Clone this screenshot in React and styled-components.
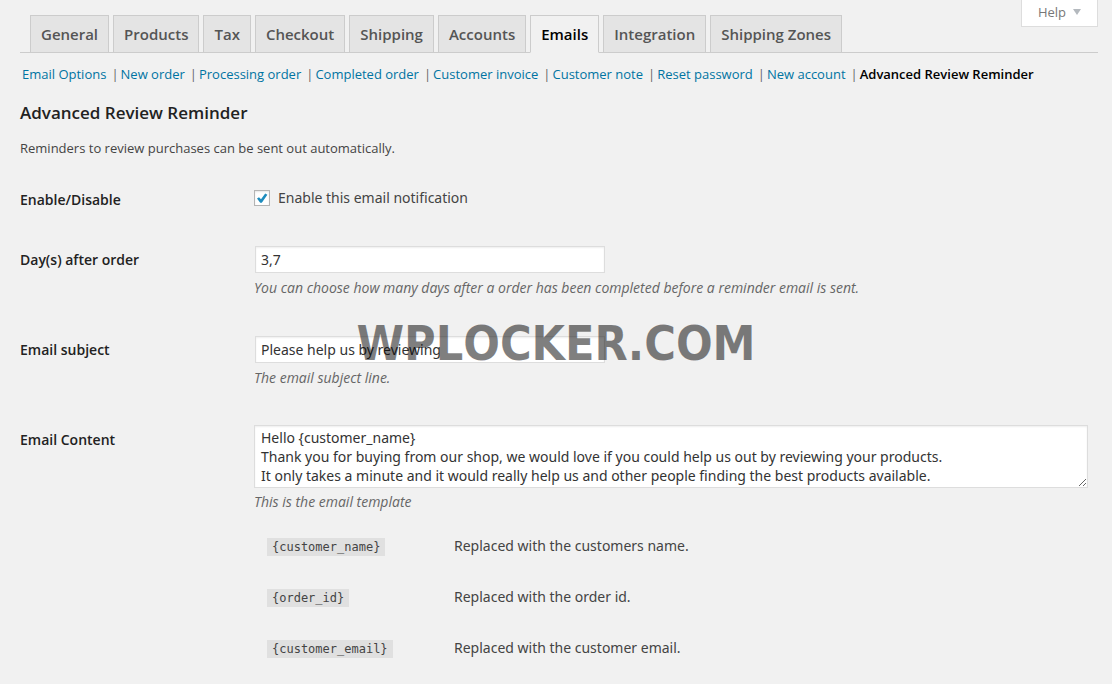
import React, { useState } from "react";
import styled, { createGlobalStyle } from "styled-components";

const GlobalStyle = createGlobalStyle`
  * { box-sizing: border-box; }
  body {
    margin: 0;
    background: #f1f1f1;
    color: #444;
    font: 14px/20px "Open Sans", sans-serif;
  }
`;

const Page = styled.main`
  padding: 0 14px 0 20px;
`;

const Header = styled.header`
  display: flex;
  justify-content: space-between;
  align-items: flex-start;
  border-bottom: 1px solid #ccc;
`;

const Tabs = styled.nav`
  display: flex;
  gap: 4px;
  padding: 15px 0 0 10px;
  margin-bottom: -1px;
`;

const Tab = styled.a`
  padding: 6px 10px;
  border: 1px solid #ccc;
  border-bottom-color: ${(p) => (p.$active ? "#f1f1f1" : "#ccc")};
  background: ${(p) => (p.$active ? "#f1f1f1" : "#e4e4e4")};
  color: ${(p) => (p.$active ? "#000" : "#555")};
  font-size: 15px;
  line-height: 24px;
  font-weight: 600;
  text-decoration: none;
  white-space: nowrap;
`;

const HelpButton = styled.button`
  display: flex;
  align-items: center;
  gap: 7px;
  padding: 2px 16px 4px;
  border: 1px solid #ddd;
  border-top: 0;
  background: #fff;
  color: #777;
  font: 13px/20px "Open Sans", sans-serif;
`;

const Arrow = styled.span`
  border: 4px solid transparent;
  border-top: 6px solid #b4b9be;
  border-bottom: 0;
`;

const SubNav = styled.ul`
  display: flex;
  flex-wrap: wrap;
  margin: 11px 0 0;
  padding: 0 2px;
  list-style: none;
  font-size: 13px;
  color: #666;
`;

const SubLink = styled.a`
  color: ${(p) => (p.$active ? "#000" : "#0074a2")};
  font-weight: ${(p) => (p.$active ? 600 : 400)};
  text-decoration: none;
`;

const Separator = styled.span`
  margin: 0 2px 0 5px;
`;

const Title = styled.h3`
  margin: 17px 0 0;
  color: #222;
  font-size: 17px;
  line-height: 24px;
  font-weight: 600;
`;

const Intro = styled.p`
  margin: 13px 0 12px;
  font-size: 13px;
`;

const Row = styled.div`
  display: grid;
  grid-template-columns: 234px minmax(0, 1fr);
`;

const RowLabel = styled.label`
  padding: 20px 10px 20px 0;
  color: #222;
  font-weight: 600;
`;

const Cell = styled.div`
  padding: 15px 10px 15px 0;
  font-family: "Noto Sans", "Open Sans", sans-serif;
`;

const CheckLabel = styled.label`
  display: flex;
  align-items: center;
  gap: 8px;
  margin: 3px 0 6px;
`;

const CheckBox = styled.span`
  display: grid;
  width: 16px;
  height: 16px;
  > * { grid-area: 1 / 1; }
  svg { pointer-events: none; }
  input:not(:checked) + svg { visibility: hidden; }
`;

const CheckInput = styled.input`
  appearance: none;
  margin: 0;
  border: 1px solid #b4b4b4;
  background: #fff;
  box-shadow: inset 0 1px 2px rgba(0, 0, 0, 0.1);
`;

const TextInput = styled.input`
  display: block;
  width: 350px;
  max-width: 100%;
  height: 27px;
  margin: 1px 1px 5px;
  padding: 3px 5px;
  border: 1px solid #ddd;
  background: #fff;
  box-shadow: inset 0 1px 2px rgba(0, 0, 0, 0.07);
  color: #333;
  font: 14px/19px "Noto Sans", "Open Sans", sans-serif;
`;

const TextArea = styled.textarea`
  display: block;
  width: 100%;
  height: 63px;
  padding: 2px 6px;
  border: 1px solid #ddd;
  background: #fff;
  box-shadow: inset 0 1px 2px rgba(0, 0, 0, 0.07);
  color: #333;
  font: 14px/19px "Noto Sans", "Open Sans", sans-serif;
  overflow: auto;
  resize: vertical;
`;

const Description = styled.p`
  margin: 4px 0 7px;
  color: #666;
  font-family: "Open Sans", sans-serif;
  font-style: italic;
`;

const TagTable = styled.table`
  border-spacing: 2px;
`;

const TagCell = styled.td`
  height: 49px;
  padding: 0 10px;
  width: ${(p) => (p.$name ? "186px" : "auto")};
`;

const Code = styled.code`
  display: inline-block;
  margin: 0 1px;
  padding: 0 5px;
  background: #e0e0e0;
  font: 12px/18px "DejaVu Sans Mono", monospace;
`;

const Watermark = styled.div`
  position: absolute;
  top: 314px;
  left: 0;
  right: 0;
  text-align: center;
  color: rgba(0, 0, 0, 0.5);
  font: bold 48px/58px "DejaVu Sans Condensed", "DejaVu Sans", sans-serif;
  font-kerning: none;
  pointer-events: none;
`;

const tabs = ["General", "Products", "Tax", "Checkout", "Shipping", "Accounts", "Emails", "Integration", "Shipping Zones"];

const sections = [
  "Email Options", "New order", "Processing order", "Completed order", "Customer invoice",
  "Customer note", "Reset password", "New account", "Advanced Review Reminder",
];

const tags = [
  ["{customer_name}", "Replaced with the customers name."],
  ["{order_id}", "Replaced with the order id."],
  ["{customer_email}", "Replaced with the customer email."],
];

const template = `Hello {customer_name}
Thank you for buying from our shop, we would love if you could help us out by reviewing your products.
It only takes a minute and it would really help us and other people finding the best products available.`;

export default function App() {
  const [enabled, setEnabled] = useState(true);
  return (
    <>
      <GlobalStyle />
      <Page>
        <Header>
          <Tabs>
            {tabs.map((t) => (
              <Tab key={t} href="#" $active={t === "Emails"}>{t}</Tab>
            ))}
          </Tabs>
          <HelpButton type="button">Help<Arrow /></HelpButton>
        </Header>
        <SubNav>
          {sections.map((s, i) => (
            <li key={s}>
              <SubLink href="#" $active={i === sections.length - 1}>{s}</SubLink>
              {i < sections.length - 1 && <Separator>|</Separator>}
            </li>
          ))}
        </SubNav>
        <Title>Advanced Review Reminder</Title>
        <Intro>Reminders to review purchases can be sent out automatically.</Intro>
        <form>
          <Row>
            <RowLabel htmlFor="enabled">Enable/Disable</RowLabel>
            <Cell>
              <CheckLabel>
                <CheckBox>
                  <CheckInput id="enabled" type="checkbox" checked={enabled} onChange={(e) => setEnabled(e.target.checked)} />
                  <svg width="16" height="16" viewBox="0 0 16 16" aria-hidden="true">
                    <path d="M3 8.6 5 7.2 7 9.2 11.2 3.4 13.4 4.8 7.8 12.8 6.2 12.8Z" fill="#1e8cbe" />
                  </svg>
                </CheckBox>
                Enable this email notification
              </CheckLabel>
            </Cell>
          </Row>
          <Row>
            <RowLabel htmlFor="days">Day(s) after order</RowLabel>
            <Cell>
              <TextInput id="days" type="text" defaultValue="3,7" />
              <Description>You can choose how many days after a order has been completed before a reminder email is sent.</Description>
            </Cell>
          </Row>
          <Row>
            <RowLabel htmlFor="subject">Email subject</RowLabel>
            <Cell>
              <TextInput id="subject" type="text" defaultValue="Please help us by reviewing" />
              <Description>The email subject line.</Description>
            </Cell>
          </Row>
          <Row>
            <RowLabel htmlFor="content">Email Content</RowLabel>
            <Cell>
              <TextArea id="content" defaultValue={template} />
              <Description>This is the email template</Description>
              <TagTable>
                <tbody>
                  {tags.map(([name, text]) => (
                    <tr key={name}>
                      <TagCell $name><Code>{name}</Code></TagCell>
                      <TagCell>{text}</TagCell>
                    </tr>
                  ))}
                </tbody>
              </TagTable>
            </Cell>
          </Row>
        </form>
      </Page>
      <Watermark>WPLOCKER.COM</Watermark>
    </>
  );
}
